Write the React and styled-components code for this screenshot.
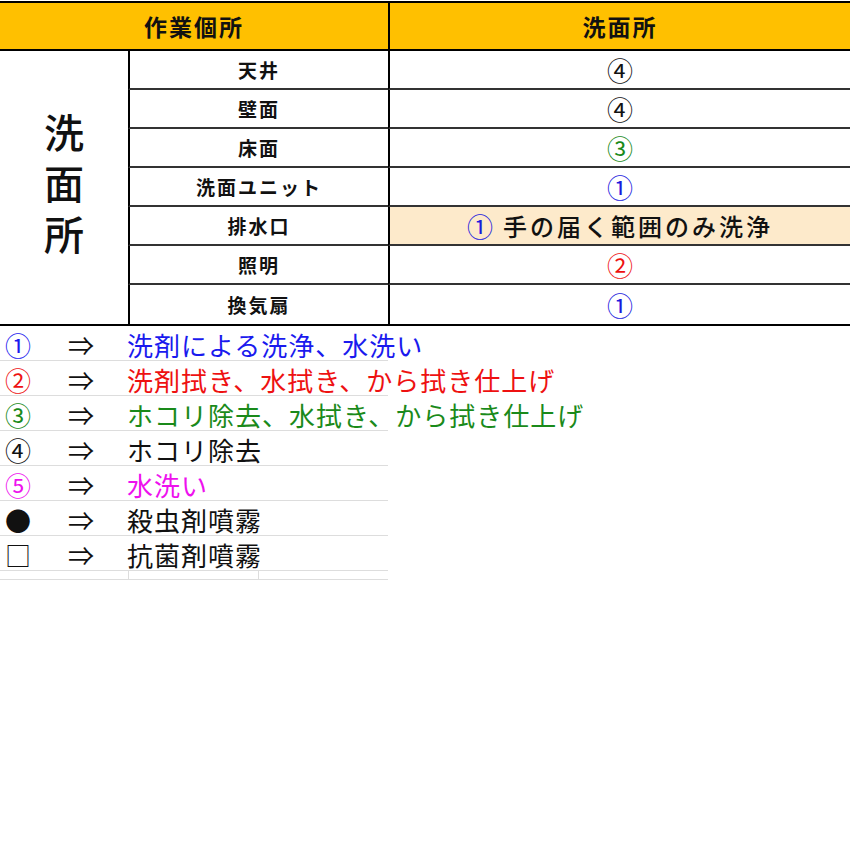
import React from 'react';
import styled, { createGlobalStyle } from 'styled-components';

const Global = createGlobalStyle`
  body { margin: 0; background: #fff; font-family: "Noto Sans CJK JP", "Noto Sans", sans-serif; }
`;

const Table = styled.div`
  display: grid;
  grid-template-columns: 128px 260px 1fr;
  grid-template-rows: 48px repeat(7, 39px);
  border-top: 2px solid #000;
  border-bottom: 2px solid #000;
  margin-top: 1px;
`;

const Head = styled.div`
  grid-column: ${p => p.span};
  background: #ffc000;
  display: flex;
  align-items: center;
  justify-content: center;
  font-size: 23px;
  letter-spacing: 2px;
  font-weight: 700;
  color: #111;
  border-bottom: 2px solid #000;
  border-left: ${p => (p.first ? 'none' : '2px solid #000')};
`;

const Area = styled.div`
  grid-row: 2 / span 7;
  display: flex;
  flex-direction: column;
  align-items: center;
  justify-content: center;
  padding-bottom: 10px;
`;

const AreaChar = styled.span`
  display: block;
  font-size: 40px;
  font-weight: 500;
  line-height: 51px;
  height: 51px;
  color: #111;
`;

const Cell = styled.div`
  display: flex;
  align-items: center;
  justify-content: center;
  font-size: ${p => (p.mark ? '26px' : '19px')};
  letter-spacing: ${p => (p.mark ? 0 : '2px')};
  font-weight: ${p => (p.mark ? 400 : 700)};
  color: ${p => p.color || '#111'};
  background: ${p => p.bg || '#fff'};
  border-left: 2px solid #000;
  border-bottom: ${p => (p.last ? 'none' : '2px solid #333')};
  gap: 10px;
`;

const Note = styled.span`
  color: #111;
  font-size: 24px;
  letter-spacing: 3px;
  font-weight: 500;
`;

const Legend = styled.div`
  display: flex;
  flex-direction: column;
`;

const LegendRow = styled.div`
  display: grid;
  grid-template-columns: 64px 63px 1fr;
  align-items: center;
  height: 34px;
  width: 388px;
  border-bottom: 1px solid #ddd;
  font-size: 26px;
  letter-spacing: 1px;
  color: ${p => p.color};
  white-space: nowrap;
`;

const Sym = styled.span`
  padding-left: 5px;
`;

const Arrow = styled.span`
  color: #111;
  padding-left: 4px;
`;

const Blank = styled.div`
  display: grid;
  grid-template-columns: 128px 130px 130px;
  width: 388px;
  height: 8px;
  border-bottom: 1px solid #ddd;
  & > div + div { border-left: 1px solid #ddd; }
`;

const rows = [
  ['天井', '④', '#111'],
  ['壁面', '④', '#111'],
  ['床面', '③', '#1a8a1a'],
  ['洗面ユニット', '①', '#1a1add'],
  ['排水口', '①', '#1a1add', '手の届く範囲のみ洗浄', '#fdeacb'],
  ['照明', '②', '#ee1111'],
  ['換気扇', '①', '#1a1add'],
];

const legend = [
  ['①', '洗剤による洗浄、水洗い', '#1a1aee'],
  ['②', '洗剤拭き、水拭き、から拭き仕上げ', '#ee1111'],
  ['③', 'ホコリ除去、水拭き、から拭き仕上げ', '#1a8a1a'],
  ['④', 'ホコリ除去', '#111'],
  ['⑤', '水洗い', '#ee11ee'],
  ['●', '殺虫剤噴霧', '#111'],
  ['□', '抗菌剤噴霧', '#111'],
];

export default function App() {
  return (
    <>
      <Global />
      <Table>
        <Head span="1 / span 2" first>作業個所</Head>
        <Head span="3">洗面所</Head>
        <Area><AreaChar>洗</AreaChar><AreaChar>面</AreaChar><AreaChar>所</AreaChar></Area>
        {rows.map(([name, mark, color, note, bg], i) => (
          <React.Fragment key={name}>
            <Cell last={i === 6}>{name}</Cell>
            <Cell mark color={color} bg={bg} last={i === 6}>
              {mark}{note && <Note>{note}</Note>}
            </Cell>
          </React.Fragment>
        ))}
      </Table>
      <Legend>
        {legend.map(([s, t, c]) => (
          <LegendRow key={s} color={c}>
            <Sym>{s}</Sym>
            <Arrow>⇒</Arrow>
            <span>{t}</span>
          </LegendRow>
        ))}
        <Blank><div /><div /><div /></Blank>
      </Legend>
    </>
  );
}
